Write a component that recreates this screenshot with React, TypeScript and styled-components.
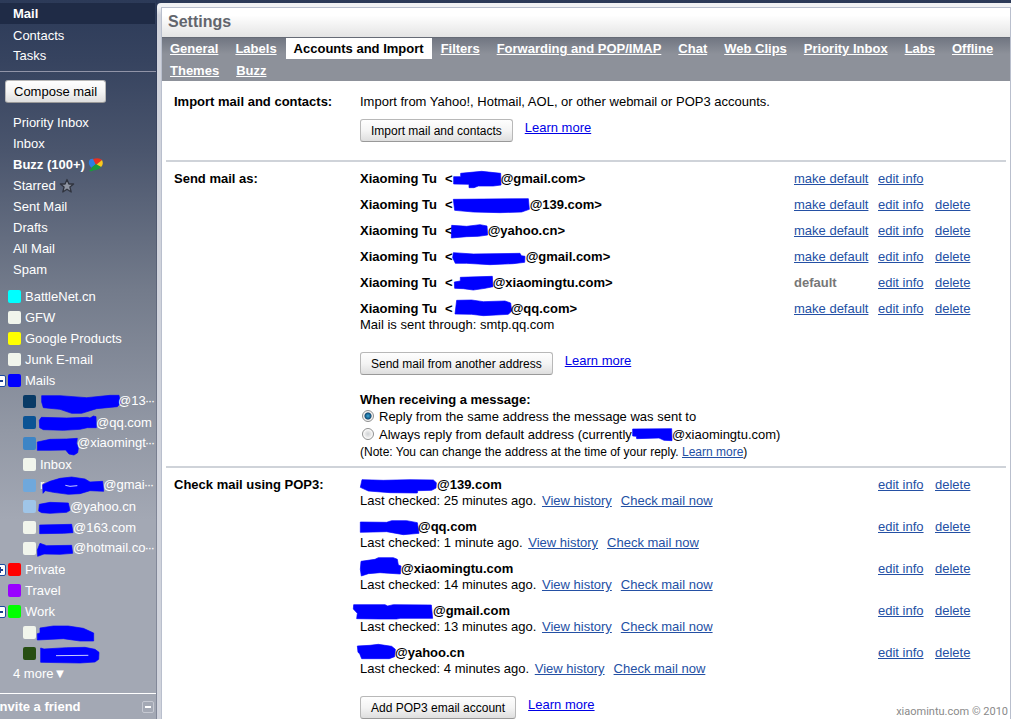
import React from "react";
import styled, { createGlobalStyle, css } from "styled-components";

const GlobalStyle = createGlobalStyle`
  *, *::before, *::after { box-sizing: border-box; }
  body {
    margin: 0;
    font-family: "Liberation Sans", Arial, sans-serif;
    font-size: 13px;
    line-height: 16px;
    color: #000;
  }
`;

const Page = styled.div`
  position: relative;
  display: flex;
  min-height: 100vh;
  overflow: hidden;
  background: linear-gradient(#2c3a58 0, #36435f 60px, #4a556d 150px, #737b8b 290px, #9298a5 430px, #a3a8b4 520px);
`;

/* ---------- sidebar ---------- */

const Sidebar = styled.aside`
  flex: 0 0 157px;
  min-width: 0;
  display: flex;
  flex-direction: column;
  padding-top: 3px;
  border-right: 1px solid rgba(30, 40, 70, 0.25);
  color: #fff;
  white-space: nowrap;
  overflow: hidden;
`;

const AppLinks = styled.nav`
  padding-bottom: 5px;
  border-bottom: 1px solid #9194a8;
`;

const AppLink = styled.a<{ $active?: boolean }>`
  display: block;
  height: ${(p) => (p.$active ? 21 : 20)}px;
  line-height: ${(p) => (p.$active ? 22 : 20)}px;
  margin: 0 1px ${(p) => (p.$active ? 2 : 0)}px 0;
  padding-left: 13px;
  color: #fff;
  text-decoration: none;
  font-weight: ${(p) => (p.$active ? "bold" : "normal")};
  background: ${(p) => (p.$active ? "#1f2b46" : "transparent")};
`;

const buttonFace = css`
  height: 23px;
  border: 1px solid #b8b8b8;
  border-bottom-color: #999;
  border-radius: 3px;
  background: linear-gradient(#fefefe, #f4f4f4 50%, #dedede);
  font-family: "Liberation Sans", Arial, sans-serif;
  line-height: 20px;
  color: #000;
  white-space: nowrap;
`;

const Button = styled.button`
  ${buttonFace}
  padding: 0 10px;
  font-size: 12px;
`;

const ComposeButton = styled.button`
  ${buttonFace}
  align-self: flex-start;
  margin: 8px 0 9px 5px;
  padding: 0 8px;
  font-size: 13px;
`;

const FolderList = styled.ul`
  margin: 0;
  padding: 0 0 6px;
  list-style: none;
`;

const FolderItem = styled.li<{ $bold?: boolean }>`
  display: flex;
  align-items: center;
  gap: 3px;
  height: 21px;
  padding-left: 13px;
  font-weight: ${(p) => (p.$bold ? "bold" : "normal")};
`;

const LabelItem = styled.li<{ $child?: boolean }>`
  display: flex;
  align-items: center;
  height: 21px;
  padding-left: ${(p) => (p.$child ? 23 : 8)}px;
`;

const SideLink = styled.a`
  color: inherit;
  text-decoration: none;
`;

const Dots = styled.span`
  font-size: 9px;
  font-weight: bold;
`;

const Swatch = styled.span<{ $color: string }>`
  flex: none;
  width: 13px;
  height: 13px;
  margin-right: 4px;
  border-radius: 2px;
  background: ${(p) => p.$color};
`;

const Expander = styled.button<{ $open: boolean }>`
  position: relative;
  flex: none;
  width: 12px;
  height: 12px;
  margin: 0 2px 0 -14px;
  padding: 0;
  border: 1px solid #1c4ba0;
  border-radius: 2px;
  background: #fff;
  &::before, &::after {
    content: "";
    position: absolute;
    background: #1c3f8c;
  }
  &::before { left: 2px; top: 4px; width: 6px; height: 2px; }
  &::after { left: 4px; top: 2px; width: 2px; height: 6px; display: ${(p) => (p.$open ? "none" : "block")}; }
`;

const MoreLink = styled.a`
  display: block;
  height: 20px;
  line-height: 20px;
  padding-left: 13px;
  color: #fff;
  text-decoration: none;
`;

const ChatBox = styled.section`
  display: flex;
  align-items: center;
  justify-content: space-between;
  height: 26px;
  margin-top: 3px;
  padding-right: 2px;
  border-top: 1px solid #fff;
`;

const ChatTitle = styled.h2`
  margin: 0 0 0 -4px;
  font-size: 13px;
`;

const MiniButton = styled.button`
  display: flex;
  align-items: center;
  justify-content: center;
  width: 12px;
  height: 12px;
  padding: 0;
  border: 1px solid #c6c9d2;
  border-radius: 2px;
  background: transparent;
  &::before {
    content: "";
    width: 6px;
    height: 2px;
    background: #fff;
  }
`;

/* ---------- settings panel ---------- */

const Frame = styled.main`
  flex: 1;
  min-width: 0;
  display: flex;
  margin-top: 3px;
  padding: 4px 0 0 4px;
  border-top-left-radius: 4px;
  background: linear-gradient(#f1f2f4 0, #f1f2f4 4px, #d0d3dc 12px);
`;

const Panel = styled.div`
  flex: 1;
  min-width: 0;
  border: 1px solid #b9bfcd;
  border-bottom: 0;
  background: #fff;
`;

const Title = styled.h1`
  margin: 0;
  height: 29px;
  padding-left: 6px;
  font-size: 16px;
  line-height: 27px;
  color: #62656d;
  background: linear-gradient(#fff 25%, #e4e4e4);
`;

const Tabs = styled.nav`
  display: flex;
  flex-wrap: wrap;
  column-gap: 1px;
  background: linear-gradient(#666b76 0, #666b76 1px, #717682 1px, #8d919a 17px);
`;

const Tab = styled.a<{ $active?: boolean }>`
  height: ${(p) => (p.$active ? 21 : 22)}px;
  margin-top: ${(p) => (p.$active ? 1 : 0)}px;
  padding: 0 8px;
  font-weight: bold;
  line-height: ${(p) => (p.$active ? 21 : 23)}px;
  color: ${(p) => (p.$active ? "#000" : "#fff")};
  background: ${(p) => (p.$active ? "#fff" : "transparent")};
  text-decoration: ${(p) => (p.$active ? "none" : "underline")};
`;

const Section = styled.section`
  display: grid;
  grid-template-columns: 186px minmax(0, 1fr);
  margin: 0 4px;
  padding: 9px 0 6px 8px;
  border-bottom: 2px solid #cfd3d9;
  &:last-child { border-bottom: 0; padding-bottom: 0; }
`;

const ImportSection = styled(Section)`
  padding: 13px 0 18px 8px;
`;

const SectionTitle = styled.h2`
  margin: 0;
  font-size: 13px;
`;

const Text = styled.p`
  margin: 0;
`;

const ActionBar = styled.div<{ $gap: number }>`
  display: flex;
  align-items: flex-start;
  gap: 12px;
  margin-top: ${(p) => p.$gap}px;
`;

const HelpLink = styled.a`
  padding-top: 1px;
  color: #0000e6;
`;

const Link = styled.a`
  color: #2450a4;
`;

const Accounts = styled.table`
  width: 100%;
  border-collapse: collapse;
  table-layout: fixed;
`;

const NameCol = styled.col``;
const DefaultCol = styled.col` width: 84px; `;
const EditCol = styled.col` width: 57px; `;
const DeleteCol = styled.col` width: 71px; `;

const Cell = styled.td`
  padding: 0 0 10px;
  vertical-align: top;
  white-space: nowrap;
  tr:last-child > & { padding-bottom: 0; }
`;

const Address = styled.strong`
  display: block;
`;

const SenderName = styled.span`
  margin-right: 8px;
`;

const DefaultMark = styled.strong`
  color: #777;
`;

const CheckLinks = styled.span`
  display: inline-flex;
  gap: 9px;
  margin-left: 2px;
`;

const ReplyGroup = styled.fieldset`
  margin: 17px 0 0;
  padding: 0;
  border: 0;
`;

const Legend = styled.legend`
  padding: 0;
  font-weight: bold;
`;

const Choice = styled.label`
  display: flex;
  align-items: flex-start;
  height: 18px;
  padding-top: 1px;
`;

const Radio = styled.input`
  appearance: none;
  flex: none;
  width: 12px;
  height: 12px;
  margin: 1px 5px 0 2px;
  border: 1px solid #8e8f8f;
  border-radius: 50%;
  background: radial-gradient(circle, #cfd2d5 0, #e9e9e9 3px, #fff 5px);
  &:checked {
    background: radial-gradient(circle, #3fa9d8 0, #11507c 3px, #0d2c4a 3px, #f4f4f4 4px);
  }
`;

const Note = styled.p`
  margin: 0;
  font-size: 12px;
`;

const Copyright = styled.footer`
  position: absolute;
  right: 3px;
  bottom: 0;
  font: 11px/14px Roboto, sans-serif;
  color: #8a8a8a;
`;

/* ---------- blue marker strokes over private names ---------- */

const MarkerSvg = styled.svg`
  display: inline-block;
  flex: none;
  height: 16px;
  overflow: visible;
  vertical-align: top;
`;

type Mark = { x: number; y: number; w: number; d: string; gap?: string };

// Marker outlines use a grid three times finer than the page.
function Marker({ mark }: { mark: Mark }) {
  return (
    <MarkerSvg width={mark.w} viewBox={`${mark.x} ${mark.y} ${mark.w * 3} 48`} aria-hidden="true">
      <path d={mark.d} fill="#0000ff" stroke="#0000ff" strokeWidth="2" strokeLinejoin="round" />
      {mark.gap && <path d={mark.gap} stroke="#c9ccff" strokeWidth="3" fill="none" />}
    </MarkerSvg>
  );
}

function BuzzIcon() {
  return (
    <svg width="16" height="14" viewBox="0 0 16 14" aria-hidden="true">
      <path d="M1 3Q2 0 6 1L8 6L4 10Q0 7 1 3Z" fill="#2f7de0" />
      <path d="M5 1Q11-1 14 2L8 7Z" fill="#e8301f" />
      <path d="M14 2Q16 6 13 9L8 7Z" fill="#fbc81c" />
      <path d="M1 13Q4 11 4 9L8 6L13 9Q10 13 6 12Q4 14 1 13Z" fill="#1a9a3d" />
    </svg>
  );
}

function StarIcon() {
  return (
    <svg width="16" height="16" viewBox="0 0 16 16" aria-hidden="true">
      <path
        d="M8 1.5L9.9 6H14.6L10.9 9L12.2 14L8 11.2L3.8 14L5.1 9L1.4 6H6.1Z"
        fill="#8f95a2"
        stroke="#30343f"
        strokeWidth="1.3"
        strokeLinejoin="round"
      />
    </svg>
  );
}

/* ---------- data ---------- */

type LabelEntry = {
  color: string;
  text?: string;
  child?: boolean;
  open?: boolean;
  mark?: Mark;
  before?: string;
  cut?: boolean;
};

const labels: LabelEntry[] = [
  { color: "#00ffff", text: "BattleNet.cn" },
  { color: "#f1f5ec", text: "GFW" },
  { color: "#ffff00", text: "Google Products" },
  { color: "#f1f5ec", text: "Junk E-mail" },
  { color: "#0000ff", text: "Mails", open: true },
  { color: "#083a66", text: "@13", cut: true, child: true, mark: { x: 120, y: 339, w: 78, d: "M125 347L180 347L260 353L330 346L357 346L361 370L352 380L290 386L245 400L215 400L180 388L130 383L125 366Z" } },
  { color: "#0b5394", text: "@qq.com", child: true, mark: { x: 120, y: 402, w: 56, d: "M124 409L200 411L262 409L270 411L280 405L288 407L289 440L262 440L240 445L190 448L130 446L119 440L118 418Z" } },
  { color: "#3d85c6", text: "@xiaomingt", cut: true, child: true, mark: { x: 120, y: 45, w: 37, d: "M112 66L150 58L200 57L232 55L230 70L235 85L233 98L222 105L207 102L197 90L150 91L112 91Z" } },
  { color: "#f1f5ec", text: "Inbox", child: true },
  { color: "#6fa8dc", text: "@gmai", cut: true, child: true, before: "r", mark: { x: 132, y: 171, w: 59, d: "M128 194L150 184L180 175L215 171L255 177L270 186L308 184L311 214L270 212L240 221L205 223L160 217L136 212L129 220Z", gap: "M196 196L210 199L232 197" } },
  { color: "#9fc5e8", text: "@yahoo.cn", child: true, mark: { x: 120, y: 234, w: 30, d: "M118 250L150 244L205 246L210 268L200 274L150 277L125 275L116 270Z" } },
  { color: "#f1f5ec", text: "@163.com", child: true, mark: { x: 120, y: 297, w: 33, d: "M119 312L215 310L219 335L190 337L119 338Z" } },
  { color: "#f1f5ec", text: "@hotmail.co", cut: true, child: true, mark: { x: 120, y: 360, w: 33, d: "M120 370L140 377L215 376L218 400L180 403L132 402L113 409L112 390Z" } },
  { color: "#ff0000", text: "Private", open: false },
  { color: "#9900ff", text: "Travel" },
  { color: "#00ff00", text: "Work", open: true },
  { color: "#f1f5ec", child: true, mark: { x: 120, y: 192, w: 54, d: "M120 201L160 195L205 195L250 202L281 216L281 240L240 240L190 233L112 237L112 218L120 216Z" } },
  { color: "#274e13", child: true, mark: { x: 120, y: 255, w: 59, d: "M122 261L132 264L200 260L255 259L285 265L297 274L296 295L285 303L240 306L122 304Z", gap: "M168 284L265 283" } },
];

type Sender = { domain: string; isDefault?: boolean; noDelete?: boolean; via?: string; mark: Mark };

const senders: Sender[] = [
  { domain: "@gmail.com", noDelete: true, mark: { x: 309, y: 30, w: 48, d: "M311 47L332 47L332 37L395 31L452 37L453 72L430 75L385 75L372 80L357 80L357 70L311 69Z" } },
  { domain: "@139.com", mark: { x: 309, y: 108, w: 77, d: "M310 115L535 113L538 145L515 153L450 155L370 153L314 148Z" } },
  { domain: "@yahoo.cn", mark: { x: 309, y: 186, w: 35, d: "M305 193L350 196L390 191L411 195L413 222L385 226L350 227L304 231Z" } },
  { domain: "@gmail.com", mark: { x: 309, y: 264, w: 73, d: "M310 275L370 279L510 277L514 284L525 286L524 304L490 308L420 311L350 307L316 307L308 290Z" } },
  { domain: "@xiaomingtu.com", isDefault: true, mark: { x: 309, y: 342, w: 40, d: "M331 349L427 346L429 377L405 382L370 387L340 383L314 382L313 363L331 360Z" } },
  { domain: "@qq.com", via: "Mail is sent through: smtp.qq.com", mark: { x: 309, y: 420, w: 58, d: "M320 418L365 417L400 422L465 420L482 426L485 450L475 460L400 464L365 460L315 459Z" } },
];

type PopAccount = { domain: string; checked: string; mark: Mark };

const popAccounts: PopAccount[] = [
  { domain: "@139.com", checked: "25 minutes ago.", mark: { x: 30, y: 33, w: 77, d: "M36 41L100 43L180 41L250 42L259 50L258 66L245 73L203 74L202 81L120 80L55 75L31 64Z" } },
  { domain: "@qq.com", checked: "1 minute ago.", mark: { x: 30, y: 159, w: 58, d: "M31 168L110 169L125 164L170 164L202 170L207 202L160 206L110 197L31 199Z" } },
  { domain: "@xiaomingtu.com", checked: "14 minutes ago.", mark: { x: 30, y: 285, w: 41, d: "M33 286L75 280L85 275L130 275L142 280L145 297L153 300L151 324L90 320L55 323L34 330L31 310Z" } },
  { domain: "@gmail.com", checked: "13 minutes ago.", mark: { x: 30, y: 36, w: 73, d: "M11 41L105 41L113 45L130 41L244 42L248 82L150 82L140 84L90 84L20 83L22 67L10 54Z" } },
  { domain: "@yahoo.cn", checked: "4 minutes ago.", mark: { x: 30, y: 162, w: 35, d: "M22 165L60 163L85 160L125 166L136 175L134 197L118 203L35 203L29 188L24 184Z" } },
];

const replyMark: Mark = { x: 844, y: 258, w: 40, d: "M846 264L963 263L964 299L940 298L925 291L858 293L857 286L846 285Z" };

const tabs = ["General", "Labels", "Accounts and Import", "Filters", "Forwarding and POP/IMAP", "Chat", "Web Clips", "Priority Inbox", "Labs", "Offline", "Themes", "Buzz"];

/* ---------- page ---------- */

function SidebarView() {
  return (
    <Sidebar>
      <AppLinks>
        <AppLink href="#mail" $active>Mail</AppLink>
        <AppLink href="#contacts">Contacts</AppLink>
        <AppLink href="#tasks">Tasks</AppLink>
      </AppLinks>
      <ComposeButton type="button">Compose mail</ComposeButton>
      <FolderList>
        {["Priority Inbox", "Inbox", "Buzz (100+)", "Starred", "Sent Mail", "Drafts", "All Mail", "Spam"].map((name) => (
          <FolderItem key={name} $bold={name.startsWith("Buzz")}>
            <SideLink href="#folder">{name}</SideLink>
            {name.startsWith("Buzz") && <BuzzIcon />}
            {name === "Starred" && <StarIcon />}
          </FolderItem>
        ))}
      </FolderList>
      <FolderList>
        {labels.map((label, i) => (
          <LabelItem key={i} $child={label.child}>
            {label.open !== undefined && (
              <Expander type="button" $open={label.open} aria-label={label.open ? "Collapse" : "Expand"} />
            )}
            <Swatch $color={label.color} />
            <SideLink href="#label">
              {label.before}
              {label.mark && <Marker mark={label.mark} />}
              {label.text}
              {label.cut && <Dots>···</Dots>}
            </SideLink>
          </LabelItem>
        ))}
        <li><MoreLink href="#more">4 more▼</MoreLink></li>
      </FolderList>
      <ChatBox>
        <ChatTitle>Invite a friend</ChatTitle>
        <MiniButton type="button" aria-label="Collapse invite box" />
      </ChatBox>
    </Sidebar>
  );
}

function AccountColumns() {
  return (
    <colgroup>
      <NameCol />
      <DefaultCol />
      <EditCol />
      <DeleteCol />
    </colgroup>
  );
}

export default function App() {
  return (
    <>
      <GlobalStyle />
      <Page>
        <SidebarView />
        <Frame>
          <Panel>
            <Title>Settings</Title>
            <Tabs>
              {tabs.map((tab) => (
                <Tab key={tab} href="#tab" $active={tab === "Accounts and Import"}>{tab}</Tab>
              ))}
            </Tabs>

            <ImportSection>
              <SectionTitle>Import mail and contacts:</SectionTitle>
              <div>
                <Text>Import from Yahoo!, Hotmail, AOL, or other webmail or POP3 accounts.</Text>
                <ActionBar $gap={9}>
                  <Button type="button">Import mail and contacts</Button>
                  <HelpLink href="#help">Learn more</HelpLink>
                </ActionBar>
              </div>
            </ImportSection>

            <Section>
              <SectionTitle>Send mail as:</SectionTitle>
              <div>
                <Accounts>
                  <AccountColumns />
                  <tbody>
                    {senders.map((s, i) => (
                      <tr key={i}>
                        <Cell>
                          <Address><SenderName>Xiaoming Tu</SenderName>&lt;<Marker mark={s.mark} />{s.domain}&gt;</Address>
                          {s.via}
                        </Cell>
                        <Cell>{s.isDefault ? <DefaultMark>default</DefaultMark> : <Link href="#default">make default</Link>}</Cell>
                        <Cell><Link href="#edit">edit info</Link></Cell>
                        <Cell>{!s.noDelete && <Link href="#delete">delete</Link>}</Cell>
                      </tr>
                    ))}
                  </tbody>
                </Accounts>
                <ActionBar $gap={19}>
                  <Button type="button">Send mail from another address</Button>
                  <HelpLink href="#help">Learn more</HelpLink>
                </ActionBar>
                <ReplyGroup>
                  <Legend>When receiving a message:</Legend>
                  <Choice>
                    <Radio type="radio" name="reply" defaultChecked />
                    Reply from the same address the message was sent to
                  </Choice>
                  <Choice>
                    <Radio type="radio" name="reply" />
                    <span>Always reply from default address (currently<Marker mark={replyMark} />@xiaomingtu.com)</span>
                  </Choice>
                </ReplyGroup>
                <Note>(Note: You can change the address at the time of your reply. <Link href="#help">Learn more</Link>)</Note>
              </div>
            </Section>

            <Section>
              <SectionTitle>Check mail using POP3:</SectionTitle>
              <div>
                <Accounts>
                  <AccountColumns />
                  <tbody>
                    {popAccounts.map((p, i) => (
                      <tr key={i}>
                        <Cell colSpan={2}>
                          <Address><Marker mark={p.mark} />{p.domain}</Address>
                          Last checked: {p.checked}{" "}
                          <CheckLinks>
                            <Link href="#history">View history</Link>
                            <Link href="#check">Check mail now</Link>
                          </CheckLinks>
                        </Cell>
                        <Cell><Link href="#edit">edit info</Link></Cell>
                        <Cell><Link href="#delete">delete</Link></Cell>
                      </tr>
                    ))}
                  </tbody>
                </Accounts>
                <ActionBar $gap={19}>
                  <Button type="button">Add POP3 email account</Button>
                  <HelpLink href="#help">Learn more</HelpLink>
                </ActionBar>
              </div>
            </Section>
          </Panel>
        </Frame>
        <Copyright>xiaomintu.com © 2010</Copyright>
      </Page>
    </>
  );
}
